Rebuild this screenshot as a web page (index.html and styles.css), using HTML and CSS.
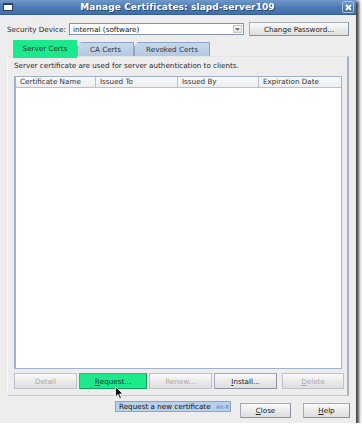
FILE: index.html
```html
<!DOCTYPE html>
<html>
<head>
<meta charset="utf-8">
<link rel="stylesheet" href="styles.css">
</head>
<body>
<div class="window">
  <div class="titlebar">
    <span class="ticon"></span>
    <span class="title">Manage Certificates: slapd-server109</span>
    <span class="tclose">
      <svg width="7" height="7" viewBox="0 0 7 7"><path d="M1 1 L6 6 M6 1 L1 6" stroke="#fff" stroke-width="1.8"/></svg>
    </span>
  </div>
  <div class="devrow">
    <span class="lbl">Security Device:</span>
    <div class="combo">
      <span class="combo-text">internal (software)</span>
      <span class="combo-arrow"><svg width="5" height="3" viewBox="0 0 5 3"><path d="M0 0 L5 0 L2.5 3 Z" fill="#777"/></svg></span>
    </div>
    <div class="btn cp">Change Password...</div>
  </div>
  <div class="tabs">
    <div class="tab sel">Server Certs</div>
    <div class="tab">CA Certs</div>
    <div class="tab">Revoked Certs</div>
  </div>
  <div class="panel">
    <div class="desc">Server certificate are used for server authentication to clients.</div>
    <div class="table">
      <div class="thead">
        <div class="th">Certificate Name</div>
        <div class="th">Issued To</div>
        <div class="th">Issued By</div>
        <div class="th last">Expiration Date</div>
      </div>
    </div>
    <div class="btnrow">
      <div class="btn dis b-detail">Detail</div>
      <div class="btn green b-request"><u>R</u>equest...</div>
      <div class="btn dis b-renew">Renew...</div>
      <div class="btn b-install"><u>I</u>nstall...</div>
      <div class="btn dis b-delete"><u>D</u>elete</div>
    </div>
  </div>
  <div class="footer">
    <div class="btn b-close"><u>C</u>lose</div>
    <div class="btn b-help"><u>H</u>elp</div>
  </div>
  <div class="tooltip">Request a new certificate <span class="accel">Alt-R</span></div>
  <svg class="cursor" width="9" height="14" viewBox="0 0 9 14">
    <path d="M0.5 0.5 L0.5 11 L3 8.6 L4.8 12.8 L6.4 12.1 L4.7 8 L8 8 Z" fill="#111" stroke="#fff" stroke-width="0.8"/>
  </svg>
</div>
</body>
</html>
```
FILE: styles.css
```css
* { box-sizing: border-box; }
html, body { margin: 0; padding: 0; background: #ffffff; }
body {
  font-family: "DejaVu Sans", "Liberation Sans", sans-serif;
  font-size: 7.2px;
  color: #2a2a2a;
}
.window {
  position: relative;
  width: 356px;
  height: 423px;
  background: #ededed;
  box-shadow: 2px 2px 3px 1px rgba(0,0,0,0.75);
  display: flex;
  flex-direction: column;
}
.titlebar {
  height: 15px;
  background: linear-gradient(#7099cb, #4d7bb3 50%, #426fa6);
  display: flex;
  align-items: center;
  padding: 0 2px 0 2px;
  border-bottom: 1px solid #35609a;
}
.ticon {
  width: 10px;
  height: 8px;
  background: #fff;
  border: 1px solid #2a3f5e;
  border-top-width: 2px;
  margin-left: 1px;
}
.title {
  flex: 1;
  text-align: center;
  color: #fff;
  font-weight: bold;
  font-size: 9px;
  text-shadow: 1px 1px 0 #2a4a75;
  letter-spacing: 0.1px;
}
.tclose {
  width: 12px;
  height: 12px;
  border: 1px solid #a9c4e4;
  border-radius: 2px;
  background: linear-gradient(#6b99cf, #3f6ca5);
  display: flex;
  align-items: center;
  justify-content: center;
}
.devrow {
  display: flex;
  align-items: center;
  height: 14px;
  margin-top: 7px;
  padding-left: 7px;
}
.lbl { width: 62px; }
.combo {
  width: 175px;
  height: 12px;
  background: #fff;
  border: 1px solid #8294ae;
  display: flex;
  align-items: center;
  justify-content: space-between;
  padding-left: 3px;
  padding-right: 1px;
}
.combo-text { color: #111; }
.combo-arrow {
  width: 9px;
  height: 8px;
  border: 1px solid #c4c9d0;
  background: linear-gradient(#fafafa, #e6e6e6);
  display: flex;
  align-items: center;
  justify-content: center;
}
.btn {
  height: 16px;
  border: 1px solid #a2abb9;
  border-right-color: #8a93a2;
  border-bottom-color: #8a93a2;
  background: linear-gradient(#fbfbfb, #e8e8e8 60%, #dedede);
  display: flex;
  align-items: center;
  justify-content: center;
  color: #222;
  white-space: nowrap;
}
.btn u { text-decoration-thickness: 1px; text-underline-offset: 1px; }
.cp { width: 100px; height: 14px; margin-left: 5px; }
.tabs {
  display: flex;
  margin-top: 4px;
  margin-left: 13px;
  height: 18px;
  align-items: flex-end;
  position: relative;
  z-index: 2;
}
.tab {
  height: 14px;
  margin-bottom: 2px;
  background: linear-gradient(#c7d8ec, #b3c9e2);
  border: 1px solid #8ea6c4;
  border-bottom: none;
  display: flex;
  align-items: center;
  justify-content: center;
  clip-path: polygon(4px 0, 100% 0, 100% 100%, 0 100%, 0 4px);
  color: #333;
}
.tab.sel {
  height: 18px;
  margin-bottom: 0;
  width: 64px;
  background: #1ce98c;
  border: none;
  clip-path: none;
  color: #1a3a2a;
  padding-bottom: 2px;
}
.tab:nth-child(2) { width: 57px; }
.tab:nth-child(3) { width: 76px; }
.panel {
  margin-top: -2px;
  margin-left: 7px;
  width: 342px;
  height: 340px;
  border: 1px solid #d6d6d6;
  border-top-color: #e4e4e4;
  border-left-color: #f8f8f8;
  border-right: 2px solid #a9b3c0;
  border-bottom-color: #c4c8ce;
  padding: 4px 0 0 6px;
  display: flex;
  flex-direction: column;
  position: relative;
  z-index: 1;
}
.desc { height: 10px; line-height: 10px; }
.table {
  margin-top: 5px;
  width: 328px;
  height: 293px;
  background: #fff;
  border: 1px solid #9fb2c9;
  border-left: 2px solid #9fb2c9;
}
.thead {
  display: grid;
  grid-template-columns: 80px 82px 81px 1fr;
  height: 11px;
  background: linear-gradient(#f8f9fb, #eceef2);
  border-bottom: 1px solid #b6c2d2;
}
.th {
  border-right: 1px solid #b6c2d2;
  padding-left: 4px;
  line-height: 10px;
  color: #333;
}
.th.last { border-right: none; }
.btnrow {
  display: flex;
  margin-top: 4px;
  height: 16px;
}
.btn.dis { color: #a9a9a9; border-color: #bcc3cd; }
.b-detail { width: 63px; }
.b-request { width: 68px; margin-left: 2px; }
.b-renew { width: 63px; margin-left: 2px; }
.b-install { width: 63px; margin-left: 2px; }
.b-delete { width: 62px; margin-left: 5px; }
.btn.green {
  background: #1ce98c;
  border: 1px solid #13c774;
  border-right-color: #0e9f5c;
  border-bottom-color: #0e9f5c;
  color: #15302a;
}
.footer {
  display: flex;
  justify-content: flex-end;
  gap: 12px;
  margin-top: 7px;
  padding-right: 6px;
}
.b-close { width: 51px; height: 15px; }
.b-help { width: 47px; height: 15px; }
.tooltip {
  position: absolute;
  left: 115px;
  top: 401px;
  width: 116px;
  height: 11px;
  background: #b9d0ea;
  border: 1px solid #8aa6c6;
  padding-left: 3px;
  line-height: 9px;
  color: #111;
  white-space: nowrap;
  overflow: hidden;
  z-index: 5;
}
.accel { font-size: 5.5px; color: #5f84b0; margin-left: 3px; }
.cursor {
  position: absolute;
  left: 115px;
  top: 386px;
  z-index: 6;
}
```
